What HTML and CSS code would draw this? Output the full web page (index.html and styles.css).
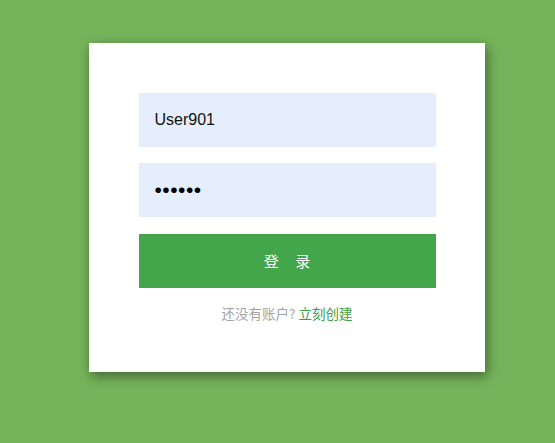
FILE: index.html
```html
<!DOCTYPE html>
<html lang="zh">
<head>
<meta charset="utf-8">
<link rel="stylesheet" href="styles.css">
</head>
<body>
<div class="card">
  <form class="form">
    <input class="field" type="text" value="User901">
    <input class="field pwd" type="password" value="123456">
    <button class="btn" type="button">登 录</button>
    <p class="hint">还没有账户? <a class="link" href="#">立刻创建</a></p>
  </form>
</div>
</body>
</html>
```
FILE: styles.css
```css
html, body {
  margin: 0;
  padding: 0;
}
body {
  background: #76b45a;
  width: 555px;
  height: 443px;
  overflow: hidden;
  font-family: "Noto Sans CJK SC", "Liberation Sans", sans-serif;
}
.card {
  box-sizing: border-box;
  width: 396px;
  height: 329px;
  margin: 43px 0 0 89px;
  background: #fff;
  box-shadow: 2px 4px 12px rgba(0, 0, 0, 0.45);
  padding-top: 50px;
}
.form {
  width: 297px;
  margin: 0 auto;
  display: flex;
  flex-direction: column;
}
.field {
  box-sizing: border-box;
  height: 54px;
  border: none;
  outline: none;
  background: #e5eefc;
  padding: 0 16px;
  font-family: "Liberation Sans", "Noto Sans CJK SC", sans-serif;
  font-size: 16px;
  color: #111;
  margin: 0 0 16px 0;
}
.pwd {
  font-size: 21px;
  letter-spacing: 0.5px;
  margin-bottom: 17px;
  color: #000;
}
.btn {
  height: 54px;
  border: none;
  background: #43a64a;
  color: #fff;
  font-family: "Noto Sans CJK SC", sans-serif;
  font-size: 15px;
  word-spacing: 13px;
  padding: 0 0 2px 0;
  cursor: pointer;
}
.hint {
  margin: 16px 0 0;
  text-align: center;
  font-size: 13.5px;
  line-height: 18px;
  color: #a3a3a3;
}
.link {
  color: #3e9c44;
  text-decoration: none;
}
```
